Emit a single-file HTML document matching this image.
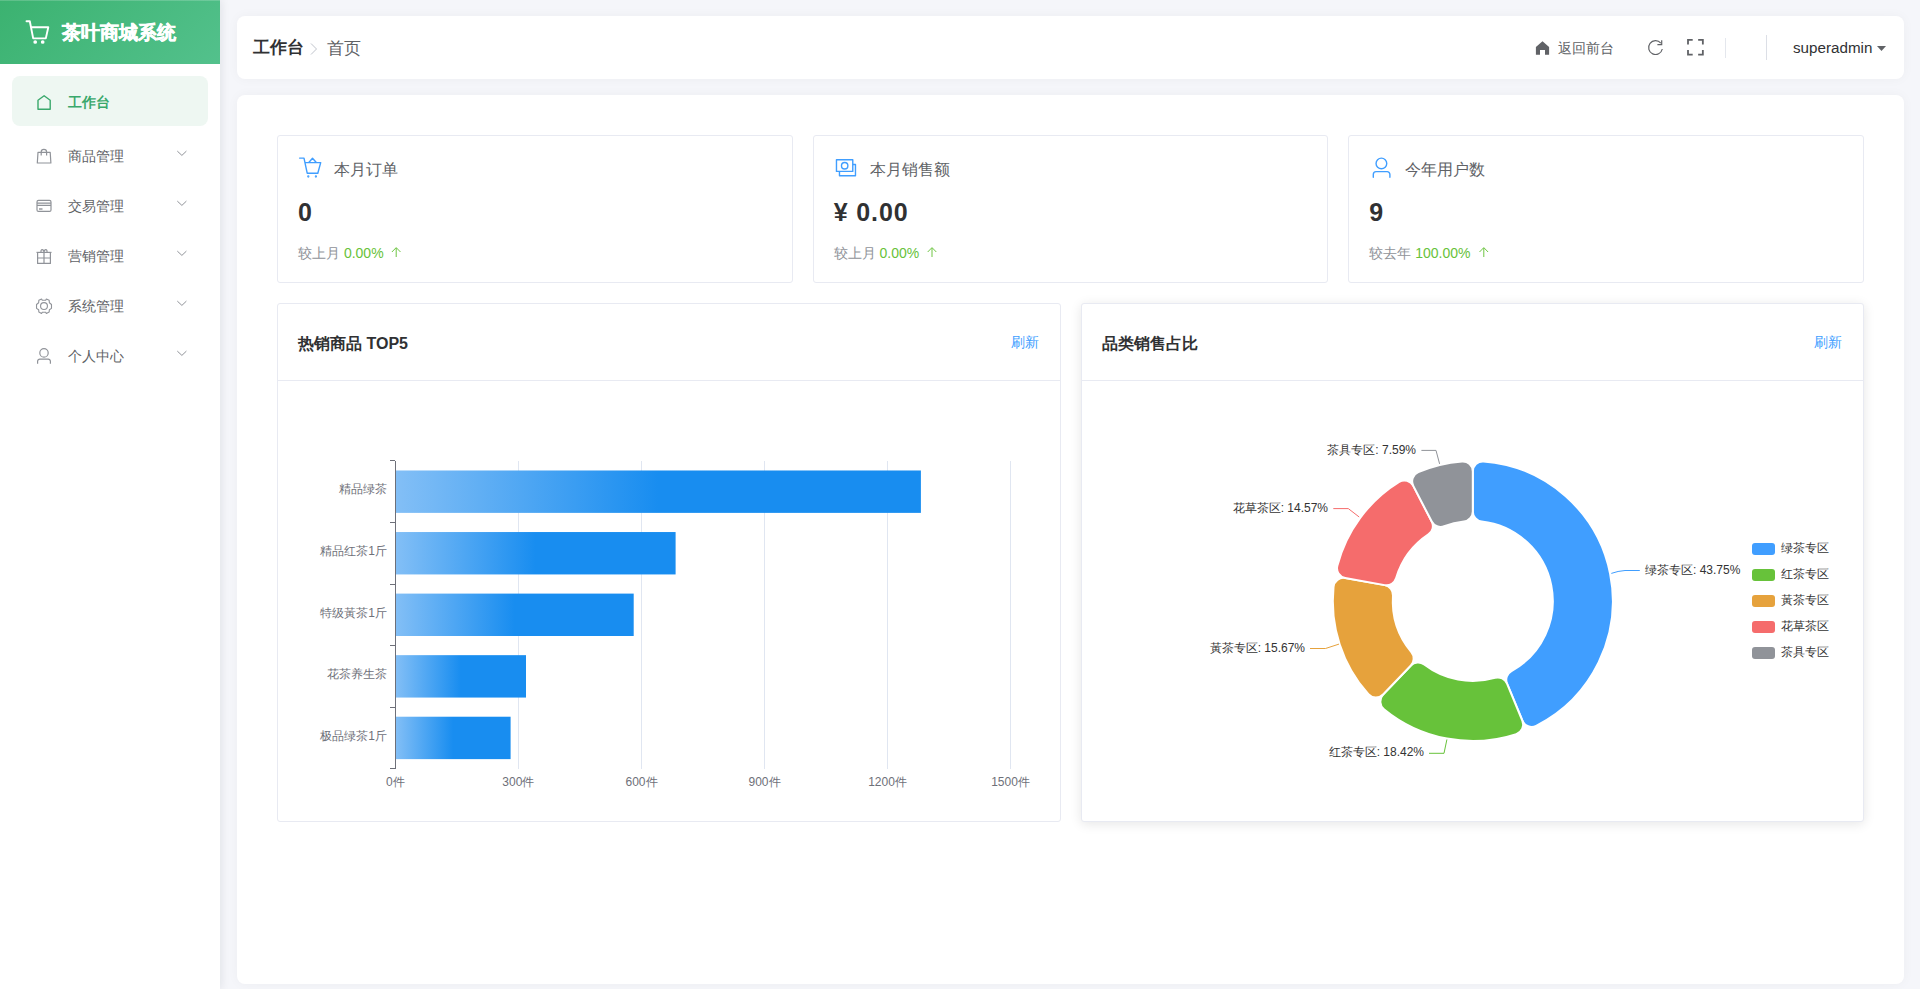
<!DOCTYPE html>
<html><head><meta charset="utf-8">
<style>
*{margin:0;padding:0;box-sizing:border-box}
html,body{width:1920px;height:989px;overflow:hidden;background:#f5f6fa;font-family:"Liberation Sans",sans-serif;color:#303133}
.abs{position:absolute}
#side{position:absolute;left:0;top:0;width:220px;height:989px;background:#fff;box-shadow:2px 0 8px rgba(0,21,41,.08)}
#logo{position:absolute;left:0;top:0;width:220px;height:64px;background:linear-gradient(135deg,#3bb270 0%,#53c18c 100%)}
#logo .t{position:absolute;left:62px;top:21px;font-size:18.8px;font-weight:bold;color:#fff;line-height:24px;-webkit-text-stroke:0.5px #fff}
.menu{position:absolute;left:0;width:220px;height:50px}
.menu .lbl{position:absolute;left:68px;top:16.8px;font-size:14px;line-height:18px;color:#606266}
.menu svg{position:absolute;left:0;top:0}
#active{position:absolute;left:12px;top:76px;width:196px;height:50px;background:#eef7f2;border-radius:8px}
#hdr{position:absolute;left:237px;top:16px;width:1667px;height:63px;background:#fff;border-radius:8px;box-shadow:0 0 12px rgba(0,0,0,.04)}
#main{position:absolute;left:237px;top:95px;width:1667px;height:889px;background:#fff;border-radius:8px;box-shadow:0 0 12px rgba(0,0,0,.04)}
.stat{position:absolute;top:135px;width:515.67px;height:148px;background:#fff;border:1px solid #e8eaf2;border-radius:3px}
.stat .tt{position:absolute;left:56px;top:22px;font-size:16px;line-height:24px;color:#606266}
.stat .num{position:absolute;left:20px;top:61px;font-size:25px;font-weight:bold;line-height:30px;color:#303133}
.stat .cmp{position:absolute;left:20px;top:107px;font-size:14px;line-height:20px;color:#909399}
.stat .cmp b{font-weight:normal;color:#67c23a}
.stat svg{position:absolute;left:0;top:0}
.card{position:absolute;top:303px;height:519px;background:#fff;border:1px solid #e8eaf2;border-radius:3px}
.card .ch{position:absolute;left:0;top:0;right:0;height:77px;border-bottom:1px solid #e8eaf2}
.card .ct{position:absolute;left:20px;top:28.7px;font-size:16px;font-weight:bold;line-height:22px;color:#303133}
.card .rf{position:absolute;right:21px;top:28px;font-size:14px;line-height:20px;color:#409eff}
#charts{position:absolute;left:0;top:0}
#charts text{font-family:"Liberation Sans",sans-serif;font-size:12px}
</style></head><body>
<div id="side">
  <div id="logo">
    <svg class="abs" style="left:0;top:0" width="60" height="64" viewBox="0 0 60 64" fill="none" stroke="#fff" stroke-width="1.9" stroke-linecap="round" stroke-linejoin="round"><path d="M26.5 21.3h3.3l3.4 17.1h12.6l2.5-11.1H31"/><circle cx="35.2" cy="42" r="0.9" fill="#fff"/><circle cx="42.7" cy="42" r="0.9" fill="#fff"/></svg>
    <div class="t">茶叶商城系统</div>
  </div>
  <div class="abs" style="left:0;top:0;width:220px;height:1px;background:rgba(255,255,255,.18)"></div>
  <div id="active"></div>
  <div class="menu" style="top:76px">
    <svg width="60" height="50" viewBox="0 0 60 50" fill="none" stroke="#3aa86c" stroke-width="1.4" stroke-linejoin="round"><path d="M38 33.2V24.2L44.1 19.7L50.2 24.2V33.2Z"/></svg>
    <div class="lbl" style="color:#3aa86c;font-weight:bold">工作台</div>
  </div>
  <div class="menu" style="top:130px">
    <svg width="220" height="50" viewBox="0 0 220 50" fill="none" stroke="#909399" stroke-width="1.2" stroke-linejoin="round"><path d="M38 22.4h12.2l0.7 10.6H37.3z"/><path d="M41.2 25.5v-3.4a2.7 2.7 0 0 1 5.4 0v3.4"/><path d="M177.3 21.1l4.6 4.3 4.5-4.3" stroke-width="1"/></svg>
    <div class="lbl">商品管理</div>
  </div>
  <div class="menu" style="top:180px">
    <svg width="220" height="50" viewBox="0 0 220 50" fill="none" stroke="#909399" stroke-width="1.2" stroke-linejoin="round"><rect x="37" y="20.4" width="14" height="11" rx="1.5"/><path d="M37 23.2h14M37 25.4h14"/><path d="M39 29h3.5" stroke-width="1.4"/><path d="M177.3 21.1l4.6 4.3 4.5-4.3" stroke-width="1"/></svg>
    <div class="lbl">交易管理</div>
  </div>
  <div class="menu" style="top:230px">
    <svg width="220" height="50" viewBox="0 0 220 50" fill="none" stroke="#909399" stroke-width="1.2" stroke-linejoin="round"><path d="M36.5 22.4h15"/><path d="M37.6 22.4v11h12.8v-11"/><path d="M44 22.4v11M37.6 28h12.8"/><path d="M44 22.2c-0.2-1.6-0.9-2.6-1.8-2.6s-1.4 0.8-1.2 2.5M44 22.2c0.2-1.6 0.9-2.6 1.8-2.6s1.4 0.8 1.2 2.5"/><path d="M177.3 21.1l4.6 4.3 4.5-4.3" stroke-width="1"/></svg>
    <div class="lbl">营销管理</div>
  </div>
  <div class="menu" style="top:280px">
    <svg width="220" height="50" viewBox="0 0 220 50" fill="none" stroke="#909399" stroke-width="1.1" stroke-linejoin="round"><path d="M41.58 19.03 L42.29 20.25 L45.73 20.25 L46.34 19.03 L49.17 20.25 L49.37 22.77 L51.49 24.49 L51.49 28.34 L49.37 29.75 L49.17 31.98 L46.34 33.39 L45.73 32.18 L42.29 32.18 L41.58 33.39 L38.85 31.98 L38.65 29.75 L36.53 28.34 L36.53 24.49 L38.65 22.77 L38.85 20.25Z"/><circle cx="44" cy="26.1" r="3.44"/><path d="M177.3 21.1l4.6 4.3 4.5-4.3" stroke-width="1"/></svg>
    <div class="lbl">系统管理</div>
  </div>
  <div class="menu" style="top:330px">
    <svg width="220" height="50" viewBox="0 0 220 50" fill="none" stroke="#909399" stroke-width="1.2" stroke-linejoin="round"><circle cx="44" cy="22.9" r="4.2"/><path d="M37.6 33.7v-2.4a2.2 2.2 0 0 1 2.2-2.2h8.4a2.2 2.2 0 0 1 2.2 2.2v2.4"/><path d="M177.3 21.1l4.6 4.3 4.5-4.3" stroke-width="1"/></svg>
    <div class="lbl">个人中心</div>
  </div>
</div>
<div id="hdr">
  <div class="abs" style="left:16px;top:19.6px;font-size:16.7px;line-height:24px;font-weight:bold;color:#303133">工作台</div>
  <svg class="abs" style="left:0;top:0" width="100" height="63" viewBox="0 0 100 63" fill="none" stroke="#c0c4cc" stroke-width="1"><path d="M74 27.5l5.5 5.5-5.5 5.5"/></svg>
  <div class="abs" style="left:90px;top:19.8px;font-size:16.5px;line-height:24px;color:#606266">首页</div>
  <svg class="abs" style="left:0;top:0" width="1400" height="63" viewBox="0 0 1400 63"><path d="M1305.5 25.3L1312.1 31V38.7H1308V34H1303V38.7H1298.9V31Z" fill="#606266"/></svg>
  <div class="abs" style="left:1321px;top:23px;font-size:14px;line-height:18px;color:#606266">返回前台</div>
  <svg class="abs" style="left:1400px;top:0" width="80" height="63" viewBox="0 0 80 63" fill="none" stroke="#606266"><path d="M23.8 27.1A6.9 6.9 0 1 0 25.3 33" stroke-width="1.2"/><path d="M24.7 24.2v4.4h-4.3" stroke-width="1.2"/><path d="M51 28.56V23.86H55.7M61.15 23.86H65.85V28.56M51 34V38.7H55.7M61.15 38.7H65.85V34" stroke-width="1.8"/></svg>
  <div class="abs" style="left:1488px;top:22px;width:1px;height:20px;background:#e4e7ed"></div>
  <div class="abs" style="left:1529px;top:19px;width:1px;height:25px;background:#dcdfe6"></div>
  <div class="abs" style="left:1556px;top:22px;font-size:15.2px;line-height:20px;color:#303133">superadmin</div>
  <svg class="abs" style="left:1640px;top:30px" width="10" height="6" viewBox="0 0 10 6"><path d="M0 0h9L4.5 5z" fill="#606266"/></svg>
</div>
<div id="main"></div>
<div class="stat" style="left:277px">
  <svg width="40" height="40" viewBox="0 0 40 40" fill="none" stroke="#409eff" stroke-width="1.4" stroke-linejoin="round" stroke-linecap="round" style="left:14px;top:14px"><path d="M7.6 8.1H12L15.2 23.2h10.6l2.9-10.6H13.4"/><path d="M17 12.3l3.5-4 3.6 4"/><circle cx="16.3" cy="26.5" r="0.45" fill="#409eff"/><circle cx="23.9" cy="26.5" r="0.45" fill="#409eff"/></svg>
  <div class="tt">本月订单</div><div class="num">0</div><div class="cmp">较上月 <b>0.00%</b></div>
</div>
<div class="stat" style="left:812.67px">
  <svg width="40" height="40" viewBox="0 0 40 40" fill="none" stroke="#409eff" stroke-width="1.4" stroke-linejoin="round" style="left:14px;top:14px"><rect x="8.47" y="9.7" width="16.3" height="11.7"/><path d="M24.77 14.5H27.47V25.7H11.47V21.4"/><circle cx="16.67" cy="15.75" r="3.2"/></svg>
  <div class="tt">本月销售额</div><div class="num" style="letter-spacing:0.9px">¥ 0.00</div><div class="cmp">较上月 <b>0.00%</b></div>
</div>
<div class="stat" style="left:1348.33px">
  <svg width="40" height="40" viewBox="0 0 40 40" fill="none" stroke="#409eff" stroke-width="1.4" stroke-linejoin="round" stroke-linecap="round" style="left:14px;top:14px"><circle cx="18.4" cy="13.45" r="5.35"/><path d="M10.3 27.3v-2.9a2.8 2.8 0 0 1 2.8-2.8h11a2.8 2.8 0 0 1 2.8 2.8v2.9"/></svg>
  <div class="tt">今年用户数</div><div class="num">9</div><div class="cmp">较去年 <b>100.00%</b></div>
</div>
<div class="card" style="left:277px;width:783.5px">
  <div class="ch"><div class="ct">热销商品 TOP5</div><div class="rf">刷新</div></div>
</div>
<div class="card" style="left:1080.5px;width:783.5px;box-shadow:0 2px 12px rgba(0,0,0,.1)">
  <div class="ch"><div class="ct">品类销售占比</div><div class="rf">刷新</div></div>
</div>
<svg id="charts" width="1920" height="989" viewBox="0 0 1920 989">
  <defs><linearGradient id="bg" x1="0" y1="0" x2="1" y2="0"><stop offset="0" stop-color="#83bff6"/><stop offset="0.5" stop-color="#188df0"/><stop offset="1" stop-color="#188df0"/></linearGradient></defs>
  <g fill="none" stroke="#67c23a" stroke-width="0.95">
    <path d="M396.2 248v9M391.9 252l4.3-4.4 4.3 4.4"/>
    <path d="M932 248v9M927.7 252l4.3-4.4 4.3 4.4"/>
    <path d="M1483.8 248v9M1479.5 252l4.3-4.4 4.3 4.4"/>
  </g>
  <g fill="#6e7079">
<rect x="518" y="461" width="1" height="308" fill="#e0e6f1"/>
<rect x="641" y="461" width="1" height="308" fill="#e0e6f1"/>
<rect x="764" y="461" width="1" height="308" fill="#e0e6f1"/>
<rect x="887" y="461" width="1" height="308" fill="#e0e6f1"/>
<rect x="1010" y="461" width="1" height="308" fill="#e0e6f1"/>
<rect x="395.50" y="470.48" width="525.40" height="42.40" fill="url(#bg)"/>
<text x="387" y="489.38" text-anchor="end" dominant-baseline="central">精品绿茶</text>
<rect x="395.50" y="532.04" width="280.10" height="42.40" fill="url(#bg)"/>
<text x="387" y="550.94" text-anchor="end" dominant-baseline="central">精品红茶1斤</text>
<rect x="395.50" y="593.60" width="238.20" height="42.40" fill="url(#bg)"/>
<text x="387" y="612.50" text-anchor="end" dominant-baseline="central">特级黃茶1斤</text>
<rect x="395.50" y="655.16" width="130.50" height="42.40" fill="url(#bg)"/>
<text x="387" y="674.06" text-anchor="end" dominant-baseline="central">花茶养生茶</text>
<rect x="395.50" y="716.72" width="115.10" height="42.40" fill="url(#bg)"/>
<text x="387" y="735.62" text-anchor="end" dominant-baseline="central">极品绿茶1斤</text>
<rect x="395" y="461" width="1" height="308" fill="#6e7079"/>
<rect x="390" y="460" width="5" height="1" fill="#6e7079"/>
<rect x="390" y="522" width="5" height="1" fill="#6e7079"/>
<rect x="390" y="584" width="5" height="1" fill="#6e7079"/>
<rect x="390" y="645" width="5" height="1" fill="#6e7079"/>
<rect x="390" y="707" width="5" height="1" fill="#6e7079"/>
<rect x="390" y="768" width="5" height="1" fill="#6e7079"/>
<text x="395.30" y="781.5" text-anchor="middle" dominant-baseline="central">0件</text>
<text x="518.30" y="781.5" text-anchor="middle" dominant-baseline="central">300件</text>
<text x="641.50" y="781.5" text-anchor="middle" dominant-baseline="central">600件</text>
<text x="764.50" y="781.5" text-anchor="middle" dominant-baseline="central">900件</text>
<text x="887.50" y="781.5" text-anchor="middle" dominant-baseline="central">1200件</text>
<text x="1010.50" y="781.5" text-anchor="middle" dominant-baseline="central">1500件</text>

  </g>
  <g stroke="#fff" stroke-width="2" stroke-linejoin="round">
<path d="M1472.80 471.39A10.00 10.00 0 0 1 1483.57 461.41A140.00 140.00 0 0 1 1536.17 725.84A10.00 10.00 0 0 1 1522.40 720.75L1507.03 683.63A10.00 10.00 0 0 1 1511.44 671.05A80.00 80.00 0 0 0 1481.69 521.50A10.00 10.00 0 0 1 1472.80 511.56Z" fill="#409eff"/>
<path d="M1522.40 720.75A10.00 10.00 0 0 1 1516.27 734.08A140.00 140.00 0 0 1 1383.94 709.18A10.00 10.00 0 0 1 1383.07 694.53L1410.88 665.54A10.00 10.00 0 0 1 1424.17 664.53A80.00 80.00 0 0 0 1495.01 677.85A10.00 10.00 0 0 1 1507.03 683.63Z" fill="#67c23a"/>
<path d="M1383.07 694.53A10.00 10.00 0 0 1 1368.39 694.27A140.00 140.00 0 0 1 1333.52 586.82A10.00 10.00 0 0 1 1345.24 577.99L1384.78 585.12A10.00 10.00 0 0 1 1392.98 595.64A80.00 80.00 0 0 0 1411.35 652.22A10.00 10.00 0 0 1 1410.88 665.54Z" fill="#e6a23c"/>
<path d="M1345.24 577.99A10.00 10.00 0 0 1 1337.34 565.63A140.00 140.00 0 0 1 1399.16 481.93A10.00 10.00 0 0 1 1413.30 485.85L1431.74 521.54A10.00 10.00 0 0 1 1428.41 534.45A80.00 80.00 0 0 0 1396.14 578.14A10.00 10.00 0 0 1 1384.78 585.12Z" fill="#f56c6c"/>
<path d="M1413.30 485.85A10.00 10.00 0 0 1 1418.30 472.05A140.00 140.00 0 0 1 1462.03 461.41A10.00 10.00 0 0 1 1472.80 471.39L1472.80 511.56A10.00 10.00 0 0 1 1463.91 521.50A80.00 80.00 0 0 0 1444.20 526.29A10.00 10.00 0 0 1 1431.74 521.54Z" fill="#909399"/>

  </g>
  <g fill="none" stroke-width="1">
    <path d="M1611.3 573.4Q1618 571 1625 570.5H1639.8" stroke="#409eff"/>
    <path d="M1446.9 739.5L1444 753.3H1429" stroke="#67c23a"/>
    <path d="M1339 644.1L1325.5 648.5H1310" stroke="#e6a23c"/>
    <path d="M1359.2 517L1348.3 508.6H1333.3" stroke="#f56c6c"/>
    <path d="M1439.6 463.9L1436 450.4H1421.4" stroke="#909399"/>
  </g>
  <g fill="#333">
    <text x="1645" y="569.5" dominant-baseline="central">绿茶专区: 43.75%</text>
    <text x="1424" y="751.5" text-anchor="end" dominant-baseline="central">红茶专区: 18.42%</text>
    <text x="1305" y="648.3" text-anchor="end" dominant-baseline="central">黃茶专区: 15.67%</text>
    <text x="1328" y="508.3" text-anchor="end" dominant-baseline="central">花草茶区: 14.57%</text>
    <text x="1416" y="449.5" text-anchor="end" dominant-baseline="central">茶具专区: 7.59%</text>
  </g>
  <g>
    <rect x="1752" y="543" width="23" height="12" rx="3" fill="#409eff"/>
    <rect x="1752" y="569" width="23" height="12" rx="3" fill="#67c23a"/>
    <rect x="1752" y="595" width="23" height="12" rx="3" fill="#e6a23c"/>
    <rect x="1752" y="621" width="23" height="12" rx="3" fill="#f56c6c"/>
    <rect x="1752" y="647" width="23" height="12" rx="3" fill="#909399"/>
  </g>
  <g fill="#333">
    <text x="1781" y="548" dominant-baseline="central">绿茶专区</text>
    <text x="1781" y="574" dominant-baseline="central">红茶专区</text>
    <text x="1781" y="600" dominant-baseline="central">黃茶专区</text>
    <text x="1781" y="626" dominant-baseline="central">花草茶区</text>
    <text x="1781" y="652" dominant-baseline="central">茶具专区</text>
  </g>
</svg>
</body></html>
